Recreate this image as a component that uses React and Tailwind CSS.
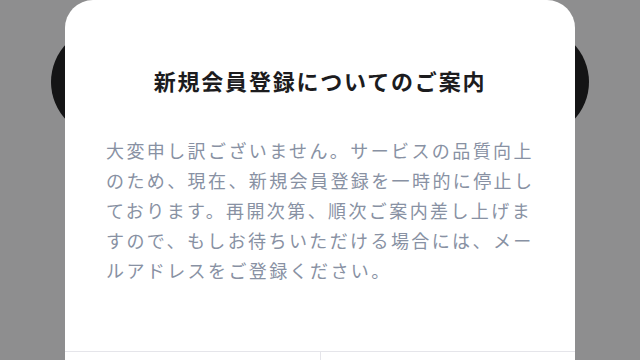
import React from "react";

export default function App() {
  const lines = [
    "大変申し訳ございません。サービスの品質向上",
    "のため、現在、新規会員登録を一時的に停止し",
    "ております。再開次第、順次ご案内差し上げま",
    "すので、もしお待ちいただける場合には、メー",
    "ルアドレスをご登録ください。",
  ];
  return (
    <div
      className="relative w-[640px] h-[360px] overflow-hidden bg-[#8e8e8f] flex justify-center"
      style={{ fontFamily: '"Noto Sans CJK JP", "Noto Sans", sans-serif' }}
    >
      <div className="absolute left-[51px] top-[27px] w-[110px] h-[110px] rounded-full bg-[#141415]" />
      <div className="absolute left-[479px] top-[27px] w-[110px] h-[110px] rounded-full bg-[#141415]" />
      <div className="relative w-[510px] h-[420px] bg-white rounded-t-[28px] flex flex-col">
        <div className="pt-[65px] text-center text-[22px] leading-[30px] font-bold tracking-[1.8px] text-[#1c1c1e]">
          新規会員登録についてのご案内
        </div>
        <div className="mt-[40px] pl-[41px] text-[18px] leading-[30px] tracking-[2.4px] text-[#8891a3] whitespace-nowrap">
          {lines.map((l, i) => (
            <div key={i}>{l}</div>
          ))}
        </div>
        <div className="mt-[66px] border-t border-[#e5e5ea] flex h-[60px]">
          <div className="flex-1 border-r border-[#e5e5ea]" />
          <div className="flex-1" />
        </div>
      </div>
    </div>
  );
}
